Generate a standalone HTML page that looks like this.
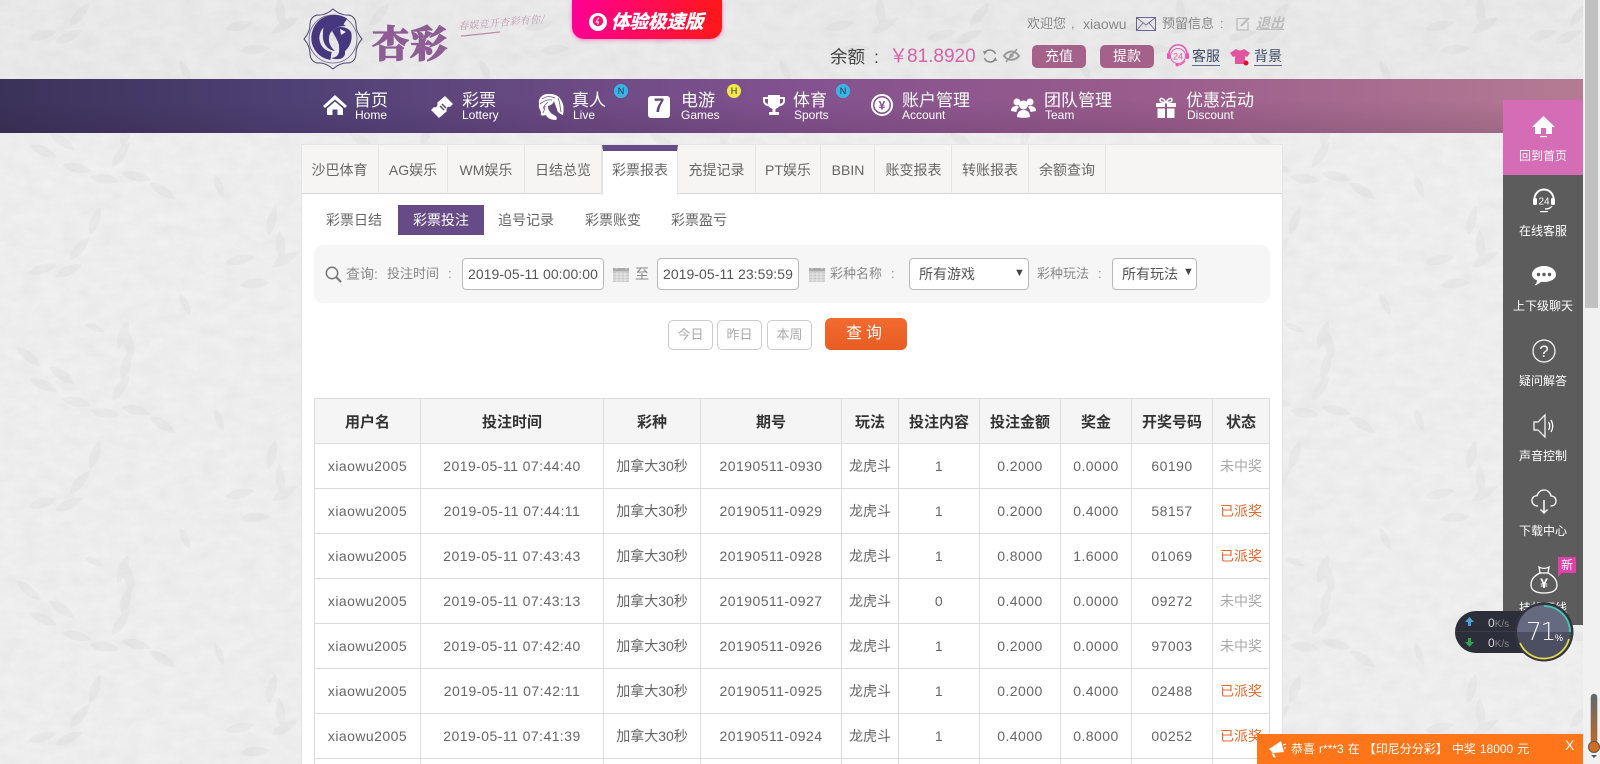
<!DOCTYPE html>
<html lang="zh-CN">
<head>
<meta charset="utf-8">
<title>彩票投注</title>
<style>
*{box-sizing:border-box;margin:0;padding:0}
html,body{width:1600px;height:764px;overflow:hidden;background:#f0f0f0}
body{position:relative;font-family:"Liberation Sans","Noto Sans CJK SC",sans-serif;font-size:14px;color:#666}
.a{position:absolute;white-space:nowrap}
svg{display:block;overflow:visible}
#bg{position:absolute;left:0;top:0}
#nav{position:absolute;left:0;top:79px;width:1583px;height:54px;background:linear-gradient(90deg,#3b3259 0,#4f4175 300px,#83528f 800px,#9a5c8c 1150px,#b57b93 1583px)}
#nav:before{content:"";position:absolute;inset:0;background:linear-gradient(180deg,rgba(0,0,0,0) 40%,rgba(30,10,30,.12) 100%)}
.nz{position:absolute;top:91px;color:#fff;font-size:17px;line-height:20px;white-space:nowrap}
.ne{position:absolute;top:108px;color:#fff;font-size:12px;line-height:15px;white-space:nowrap}
.bd{position:absolute;top:84px;width:14px;height:14px;border-radius:50%;font-size:9px;line-height:14px;text-align:center;color:#234;background:#39b4e6}
#main{position:absolute;left:301px;top:144px;width:982px;height:620px;background:#fff;border:1px solid #e4e4e4;border-bottom:0}
#tabbar{position:absolute;left:301px;top:144px;width:982px;height:50px;background:#f6f5f3;border:1px solid #e5e5e5;border-bottom:1px solid #d9d9d9}
.tab{position:absolute;top:145px;height:49px;line-height:50px;text-align:center;border-right:1px solid #e4e4e4;color:#666;font-size:14px}
.sub{position:absolute;top:205px;height:30px;line-height:30px;font-size:14px;color:#666;white-space:nowrap}
#sbar{position:absolute;left:314px;top:245px;width:956px;height:58px;background:#f6f6f6;border-radius:9px}
.lb{position:absolute;top:265px;font-size:13px;line-height:18px;color:#888;white-space:nowrap}
.ip{position:absolute;top:258px;height:32px;background:#fff;border:1px solid #bbb;border-radius:4px;line-height:31px;font-size:14px;color:#555;white-space:nowrap}
.qb{position:absolute;top:320px;height:30px;border:1px solid #ccc;border-radius:5px;background:#fff;text-align:center;line-height:28px;font-size:13px;color:#aaa}
#tw{position:absolute;left:314px;top:398px;width:958px;height:366px;overflow:hidden}
table{width:955px;border-collapse:collapse;table-layout:fixed;background:#fff}
th,td{border:1px solid #dcdcdc;text-align:center;height:45px;padding:0;overflow:hidden;white-space:nowrap}
th{background:#f5f5f5;color:#333;font-size:15px;font-weight:bold}
td{color:#666;font-size:14px;letter-spacing:.45px}
td.c{letter-spacing:0}
td.n{color:#aaa;letter-spacing:0}
td.y{color:#e8672a;letter-spacing:0}
tr.st td{height:5px;font-size:0;line-height:0}
#side{position:absolute;left:1503px;top:100px;width:80px;height:525px;background:#5c5c5c}
#side .h{position:absolute;left:0;top:0;width:80px;height:75px;background:#d56cb6}
.sl{position:absolute;left:1503px;width:80px;text-align:center;font-size:12px;line-height:16px;color:#fff;white-space:nowrap}
.si{position:absolute}
#track{position:absolute;left:1583px;top:0;width:17px;height:764px;background:#f1f1f1}
#thumb{position:absolute;left:1585px;top:0;width:13px;height:308px;background:#c1c1c1}
#pop{position:absolute;left:1257px;top:734px;width:326px;height:30px;overflow:hidden;background:#ff7519;color:#fff;font-size:12px;line-height:30px}
.pb{position:absolute;top:45px;height:23px;width:54px;background:#a5618a;border-radius:5px;color:#fff;text-align:center;line-height:23px;font-size:14px}
</style>
</head>
<body>
<svg id="bg" width="1600" height="764" viewBox="0 0 1600 764" style="overflow:hidden">
<defs>
<path id="lf" d="M0 0C7-6 20-7 30 0C20 6 7 6 0 0Z"/>
<pattern id="pt" x="0" y="55" width="300" height="234" patternUnits="userSpaceOnUse">
<rect width="300" height="234" fill="#f0f0f0"/>
<g fill="#e9e9e9">
<use href="#lf" transform="translate(17 58) rotate(40)"/>
<use href="#lf" transform="translate(30 90) rotate(25)"/>
<use href="#lf" transform="translate(50 78) rotate(35)"/>
<use href="#lf" transform="translate(62 110) rotate(12)"/>
<use href="#lf" transform="translate(90 122) rotate(8)"/>
<use href="#lf" transform="translate(122 118) rotate(14)"/>
<use href="#lf" transform="translate(150 128) rotate(32)"/>
<use href="#lf" transform="translate(112 112) rotate(-55)"/>
<use href="#lf" transform="translate(122 92) rotate(-75)"/>
<use href="#lf" transform="translate(132 70) rotate(-100)"/>
<use href="#lf" transform="translate(118 60) rotate(-70)"/>
<use href="#lf" transform="translate(85 35) rotate(22) scale(.7)"/>
<use href="#lf" transform="translate(268 180) rotate(-75)"/>
<use href="#lf" transform="translate(282 205) rotate(-95)"/>
<use href="#lf" transform="translate(272 212) rotate(-30)"/>
<use href="#lf" transform="translate(225 208) rotate(-12)"/>
<use href="#lf" transform="translate(240 230) rotate(-5)"/>
<use href="#lf" transform="translate(215 120) rotate(70) scale(.8)"/>
<use href="#lf" transform="translate(70 205) rotate(-50)"/>
<use href="#lf" transform="translate(55 222) rotate(-25)"/>
<use href="#lf" transform="translate(90 180) rotate(-70)"/>
<use href="#lf" transform="translate(28 218) rotate(-15)"/>
<use href="#lf" transform="translate(180 5) rotate(65) scale(.8)"/>
</g>
</pattern>
<filter id="mb" x="0" y="0" width="100%" height="100%"><feTurbulence type="fractalNoise" baseFrequency=".05 .08" numOctaves="5" seed="4"/><feColorMatrix values="0 0 0 0 .45 0 0 0 0 .45 0 0 0 0 .45 .2 0 0 0 -.05"/></filter>
</defs>
<rect width="1600" height="764" fill="url(#pt)"/>
<rect width="1600" height="764" filter="url(#mb)"/>
<rect width="1600" height="79" fill="#000" opacity=".02"/>
</svg>

<!-- logo -->
<svg class="a" style="left:303px;top:8px" width="60" height="62" viewBox="0 0 60 62">
<path d="M30 1Q38 8 46 7Q53 9 53 17Q53 24 59 31Q53 38 53 45Q53 53 46 55Q38 54 30 61Q22 54 14 55Q7 53 7 45Q7 38 1 31Q7 24 7 17Q7 9 14 7Q22 8 30 1Z" fill="none" stroke="#4f4470" stroke-width="1"/>
<circle cx="30" cy="31" r="24" fill="none" stroke="#6a5f8c" stroke-width=".8"/>
<path d="M42 14C33 8 19 11 14 22C9 34 16 46 28 48" fill="none" stroke="#46377f" stroke-width="8"/>
<path d="M22 17C30 13 38 14 43 18C36 18 31 20 28 24C24 30 26 38 32 43C23 42 19 33 20 26C20 22 20 19 22 17Z" fill="#46377f"/>
<path d="M29 23C34 17 44 18 48 24C50 31 47 39 42 43C43 50 37 53 28 50C38 49 36 42 36 37C35 33 32 28 29 23Z" fill="#46377f"/>
<path d="M37 21L43 24L38 27Z" fill="#f0eff3"/>
</svg>
<div class="a" style="left:372px;top:18px;font:900 37px/46px 'Noto Serif CJK SC',serif;color:#8e5d95;letter-spacing:1px;-webkit-text-stroke:1.2px #8e5d95">杏彩</div>
<div class="a" style="left:458px;top:15px;font:italic 10px/14px 'Noto Serif CJK SC',serif;color:#c09ab0;transform:rotate(-5deg);letter-spacing:.3px">春娱竞开杏彩有你/</div>
<svg class="a" style="left:460px;top:28px" width="62" height="10"><path d="M1 8C14 7 28 5 40 4" fill="none" stroke="#b88cab" stroke-width="1.300"/></svg>

<!-- pink button -->
<div class="a" style="left:572px;top:0;width:150px;height:39px;background:linear-gradient(90deg,#ff0094,#ff1818);border-radius:0 0 12px 12px;box-shadow:0 1px 4px rgba(255,60,160,.6)"></div>
<svg class="a" style="left:588px;top:12px" width="20" height="20" viewBox="0 0 20 20"><circle cx="10" cy="10" r="9" fill="#fff"/><circle cx="10" cy="9" r="5.200" fill="#ff0f70"/><path d="M11 5.500L8 10H10.500L9.500 13" stroke="#fff" stroke-width="1" fill="none"/></svg>
<div class="a" style="left:611px;top:11px;font-size:18.5px;line-height:22px;font-weight:bold;font-style:italic;color:#fff;-webkit-text-stroke:.4px #fff">体验极速版</div>

<!-- top right -->
<div class="a" style="left:1027px;top:15px;font-size:13px;line-height:18px;color:#888">欢迎您</div>
<div class="a" style="left:1071px;top:15px;font-size:13px;line-height:18px;color:#888">,</div>
<div class="a" style="left:1083px;top:15px;font-size:14px;line-height:18px;color:#888">xiaowu</div>
<svg class="a" style="left:1136px;top:17px" width="20" height="14" viewBox="0 0 20 14"><rect x=".5" y=".5" width="19" height="13" fill="none" stroke="#6b6390"/><path d="M.5.5L10 8L19.5.5M.5 13.5L7 6M19.5 13.500L13 6" fill="none" stroke="#6b6390" stroke-width=".8"/></svg>
<div class="a" style="left:1162px;top:15px;font-size:13px;line-height:18px;color:#888">预留信息<span style="margin-left:6px">:</span></div>
<svg class="a" style="left:1236px;top:17px" width="14" height="14" viewBox="0 0 14 14"><path d="M11 1.500H1V13H12V5" fill="none" stroke="#bbb" stroke-width="1.300"/><path d="M5 9L13 1" stroke="#bbb" stroke-width="2"/></svg>
<div class="a" style="left:1256px;top:14px;font-size:14px;line-height:18px;font-weight:bold;font-style:italic;color:#bbb;text-decoration:underline">退出</div>

<div class="a" style="left:830px;top:45px;font-size:17.5px;line-height:24px;color:#444">余额<span style="margin-left:9px">:</span></div>
<div class="a" style="left:889px;top:44px;font-size:19px;line-height:25px;color:#d562a8">￥</div>
<div class="a" style="left:907px;top:44px;font-size:19px;line-height:25px;color:#d562a8">81.8920</div>
<svg class="a" style="left:982px;top:48px" width="16" height="16" viewBox="0 0 16 16"><path d="M13.500 6A6 6 0 0 0 3 4.500M2.500 10A6 6 0 0 0 13 11.500" fill="none" stroke="#888" stroke-width="1.500"/><path d="M1 3L5 3.500L2.500 7ZM15 13L11 12.500L13.500 9Z" fill="#888"/></svg>
<svg class="a" style="left:1003px;top:48px" width="17" height="15" viewBox="0 0 17 15"><path d="M1 8C5 2 12 2 16 8C12 13 5 13 1 8Z" fill="none" stroke="#999" stroke-width="2"/><circle cx="8.500" cy="7.500" r="2" fill="#999"/><path d="M3 14L14 1" stroke="#999" stroke-width="1.500"/></svg>
<div class="pb" style="left:1032px">充值</div>
<div class="pb" style="left:1100px">提款</div>
<svg class="a" style="left:1167px;top:44px" width="22" height="23" viewBox="0 0 22 23"><path d="M3 14A9 9 0 1 1 19 14" fill="none" stroke="#e55bb0" stroke-width="1.600"/><circle cx="11" cy="12" r="7.500" fill="none" stroke="#e55bb0" stroke-width="1"/><rect x="0" y="9" width="3" height="6" rx="1" fill="#e55bb0"/><rect x="19" y="9" width="3" height="6" rx="1" fill="#e55bb0"/><path d="M18 17Q15 21 11 21" stroke="#e55bb0" fill="none" stroke-width="1.300"/><circle cx="10" cy="21" r="1.500" fill="#e55bb0"/><text x="11" y="15.500" font-size="9" text-anchor="middle" fill="#e55bb0" font-family="Liberation Sans">24</text></svg>
<div class="a" style="left:1192px;top:47px;font-size:14px;line-height:18px;color:#3d4a66;border-bottom:1px solid #5a6a8a">客服</div>
<svg class="a" style="left:1230px;top:48px" width="21" height="18" viewBox="0 0 21 18"><path d="M6 1L0 5L3 9L5 8V16H15V8L17 9L20 5L14 1Q10 4 6 1Z" fill="#e2549f"/><circle cx="16" cy="15" r="2.500" fill="#e0102a"/></svg>
<div class="a" style="left:1254px;top:47px;font-size:14px;line-height:18px;color:#3d4a66;border-bottom:1px solid #5a6a8a">背景</div>

<!-- nav -->
<div id="nav"></div>
<svg class="a" style="left:323px;top:95px" width="24" height="20" viewBox="0 0 24 20"><path d="M12 0L24 11L22 13L12 4.500L2 13L0 11ZM4 13.500L12 6.500L20 13.500V20H14.500V14.500H9.500V20H4Z" fill="#fff"/></svg>
<div class="nz" style="left:354px">首页</div><div class="ne" style="left:355px">Home</div>
<svg class="a" style="left:430px;top:95px" width="24" height="24" viewBox="0 0 24 24"><path d="M15 1L23 9L20 12Q18 11 17 13Q16 15 17 16L9 23L1 15L4 12Q6 13 7 11Q8 9 7 8Z" fill="#fff"/><path d="M10 11L14 15M12 9L16 13" stroke="#5a4a7e" stroke-width="1.500"/></svg>
<div class="nz" style="left:462px">彩票</div><div class="ne" style="left:462px">Lottery</div>
<svg class="a" style="left:538px;top:93px" width="26" height="28" viewBox="0 0 26 28"><path d="M12 1C5 0 0 5 1 11C0 15 3 17 3 20C2 23 5 23 8 22C9 25 13 27 18 27C20 25 18 23 16 22C12 20 10 17 10 13C13 12 15 11 16 8C17 11 18 14 19 16C19 19 22 21 25 22C26 17 26 11 23 7C21 3 17 1 12 1Z" fill="#fff"/><path d="M4 6C8 3 13 3 17 5M2 11C6 8 10 6 14 7M5 16C6 12 8 11 10 9M20 5C22 9 22 14 23 19M5 20C6 18 7 15 7 13" stroke="#6b5285" fill="none" stroke-width=".8"/></svg>
<div class="nz" style="left:572px">真人</div><div class="ne" style="left:573px">Live</div>
<div class="bd" style="left:614px">N</div>
<div class="a" style="left:648px;top:96px;width:22px;height:22px;background:#fff;border-radius:3px;text-align:center;font-size:19px;line-height:22px;font-weight:bold;color:#5e4a7f">7</div>
<div class="nz" style="left:681px">电游</div><div class="ne" style="left:681px">Games</div>
<div class="bd" style="left:727px;background:#f1e948">H</div>
<svg class="a" style="left:763px;top:95px" width="22" height="22" viewBox="0 0 22 22"><path d="M5 0H17V2H22V6C22 9 19 11 16 11.500C15 13 13 13.500 12.500 14V17H16V20H6V17H9.500V14C9 13.500 7 13 6 11.500C3 11 0 9 0 6V2H5ZM2 4V6C2 7.500 3.500 8.500 5 9V4ZM20 4H17V9C18.500 8.500 20 7.500 20 6Z" fill="#fff"/></svg>
<div class="nz" style="left:793px">体育</div><div class="ne" style="left:794px">Sports</div>
<div class="bd" style="left:836px">N</div>
<svg class="a" style="left:871px;top:94px" width="22" height="22" viewBox="0 0 22 22"><circle cx="11" cy="11" r="10" fill="none" stroke="#fff" stroke-width="2"/><circle cx="11" cy="11" r="7.500" fill="#fff"/><text x="11" y="15.500" font-size="12" font-weight="bold" text-anchor="middle" fill="#7f5288" font-family="Liberation Sans">¥</text></svg>
<div class="nz" style="left:902px">账户管理</div><div class="ne" style="left:902px">Account</div>
<svg class="a" style="left:1011px;top:96px" width="25" height="22" viewBox="0 0 25 22"><circle cx="6" cy="6" r="3.500" fill="#fff"/><circle cx="19" cy="6" r="3.500" fill="#fff"/><circle cx="12.500" cy="9" r="4.500" fill="#fff"/><path d="M0 15C0 11 3 10 6 10C7 10 7.500 10.500 8 11C6 13 5.500 15 5.500 16ZM25 15C25 11 22 10 19 10C18 10 17.500 10.500 17 11C19 13 19.500 15 19.500 16ZM6 21C6 16 9 14 12.500 14C16 14 19 16 19 21C15 22 10 22 6 21Z" fill="#fff"/></svg>
<div class="nz" style="left:1044px">团队管理</div><div class="ne" style="left:1045px">Team</div>
<svg class="a" style="left:1156px;top:97px" width="20" height="21" viewBox="0 0 20 21"><path d="M0 6H9V10H0ZM11 6H20V10H11ZM1.500 11.500H9V21H1.500ZM11 11.500H18.500V21H11Z" fill="#fff"/><path d="M10 5.500C7 5.500 4 5 4 3C4 .5 7 .5 10 5.500C13 .5 16 .5 16 3C16 5 13 5.500 10 5.500Z" fill="none" stroke="#fff" stroke-width="1.500"/></svg>
<div class="nz" style="left:1186px">优惠活动</div><div class="ne" style="left:1187px">Discount</div>

<!-- main -->
<div id="main"></div>
<div id="tabbar"></div>
<div class="tab" style="left:301px;width:78px">沙巴体育</div>
<div class="tab" style="left:379px;width:69px">AG娱乐</div>
<div class="tab" style="left:448px;width:77px">WM娱乐</div>
<div class="tab" style="left:525px;width:77px">日结总览</div>
<div class="tab" style="left:602px;width:76px;background:#fff;height:50px;border-left:1px solid #e4e4e4;border-top:6px solid #664b87;line-height:39px;top:145px">彩票报表</div>
<div class="tab" style="left:678px;width:78px">充提记录</div>
<div class="tab" style="left:756px;width:65px">PT娱乐</div>
<div class="tab" style="left:821px;width:54px;padding-left:1px">BBIN</div>
<div class="tab" style="left:875px;width:77px;padding-left:1px">账变报表</div>
<div class="tab" style="left:952px;width:77px">转账报表</div>
<div class="tab" style="left:1029px;width:77px">余额查询</div>

<div class="sub" style="left:326px">彩票日结</div>
<div class="sub" style="left:398px;width:86px;text-align:center;background:#664b87;color:#fff">彩票投注</div>
<div class="sub" style="left:498px">追号记录</div>
<div class="sub" style="left:585px">彩票账变</div>
<div class="sub" style="left:671px">彩票盈亏</div>

<div id="sbar"></div>
<svg class="a" style="left:325px;top:266px" width="17" height="17" viewBox="0 0 17 17"><circle cx="7" cy="7" r="5.700" fill="none" stroke="#777" stroke-width="1.500"/><path d="M11 11L16 16" stroke="#777" stroke-width="2"/></svg>
<div class="lb" style="left:346px;font-size:14px">查询:</div>
<div class="lb" style="left:387px">投注时间<span style="margin-left:9px">:</span></div>
<div class="ip" style="left:462px;width:142px;padding-left:5px;letter-spacing:.05px">2019-05-11 00:00:00</div>
<svg class="a" style="left:613px;top:266px" width="16" height="16" viewBox="0 0 16 16"><rect y="2" width="16" height="14" fill="#c8c8c8"/><rect y="2" width="16" height="3" fill="#aaa"/><path d="M3 0V3M13 0V3M0 8H16M0 11H16M0 14H16M4 6V16M8 6V16M12 6V16" stroke="#f2f2f2" stroke-width=".7"/></svg>
<div class="lb" style="left:635px;font-size:14px">至</div>
<div class="ip" style="left:657px;width:142px;padding-left:5px;letter-spacing:.05px">2019-05-11 23:59:59</div>
<svg class="a" style="left:809px;top:266px" width="16" height="16" viewBox="0 0 16 16"><rect y="2" width="16" height="14" fill="#c8c8c8"/><rect y="2" width="16" height="3" fill="#aaa"/><path d="M3 0V3M13 0V3M0 8H16M0 11H16M0 14H16M4 6V16M8 6V16M12 6V16" stroke="#f2f2f2" stroke-width=".7"/></svg>
<div class="lb" style="left:830px">彩种名称<span style="margin-left:9px">:</span></div>
<div class="ip" style="left:909px;width:120px;padding-left:9px">所有游戏<span class="a" style="left:104px;top:-1px;font-size:11px;color:#444">▼</span></div>
<div class="lb" style="left:1037px">彩种玩法<span style="margin-left:9px">:</span></div>
<div class="ip" style="left:1112px;width:85px;padding-left:9px">所有玩法<span class="a" style="left:70px;top:-2px;font-size:11px;color:#444">▼</span></div>

<div class="qb" style="left:668px;width:45px">今日</div>
<div class="qb" style="left:717px;width:45px">昨日</div>
<div class="qb" style="left:767px;width:45px">本周</div>
<div class="a" style="left:825px;top:318px;width:82px;height:32px;border-radius:6px;background:linear-gradient(180deg,#f26b30,#e85c22);color:#fff;text-align:center;font-size:16px;line-height:31px;letter-spacing:4px">查询</div>

<div id="tw">
<table>
<colgroup><col style="width:106px"><col style="width:183px"><col style="width:97px"><col style="width:141px"><col style="width:57px"><col style="width:81px"><col style="width:81px"><col style="width:71px"><col style="width:81px"><col style="width:57px"></colgroup>
<tr><th>用户名</th><th>投注时间</th><th>彩种</th><th>期号</th><th>玩法</th><th>投注内容</th><th>投注金额</th><th>奖金</th><th>开奖号码</th><th>状态</th></tr>
<tr><td>xiaowu2005</td><td>2019-05-11 07:44:40</td><td class="c">加拿大30秒</td><td>20190511-0930</td><td class="c">龙虎斗</td><td>1</td><td>0.2000</td><td>0.0000</td><td>60190</td><td class="n">未中奖</td></tr>
<tr><td>xiaowu2005</td><td>2019-05-11 07:44:11</td><td class="c">加拿大30秒</td><td>20190511-0929</td><td class="c">龙虎斗</td><td>1</td><td>0.2000</td><td>0.4000</td><td>58157</td><td class="y">已派奖</td></tr>
<tr><td>xiaowu2005</td><td>2019-05-11 07:43:43</td><td class="c">加拿大30秒</td><td>20190511-0928</td><td class="c">龙虎斗</td><td>1</td><td>0.8000</td><td>1.6000</td><td>01069</td><td class="y">已派奖</td></tr>
<tr><td>xiaowu2005</td><td>2019-05-11 07:43:13</td><td class="c">加拿大30秒</td><td>20190511-0927</td><td class="c">龙虎斗</td><td>0</td><td>0.4000</td><td>0.0000</td><td>09272</td><td class="n">未中奖</td></tr>
<tr><td>xiaowu2005</td><td>2019-05-11 07:42:40</td><td class="c">加拿大30秒</td><td>20190511-0926</td><td class="c">龙虎斗</td><td>1</td><td>0.2000</td><td>0.0000</td><td>97003</td><td class="n">未中奖</td></tr>
<tr><td>xiaowu2005</td><td>2019-05-11 07:42:11</td><td class="c">加拿大30秒</td><td>20190511-0925</td><td class="c">龙虎斗</td><td>1</td><td>0.2000</td><td>0.4000</td><td>02488</td><td class="y">已派奖</td></tr>
<tr><td>xiaowu2005</td><td>2019-05-11 07:41:39</td><td class="c">加拿大30秒</td><td>20190511-0924</td><td class="c">龙虎斗</td><td>1</td><td>0.4000</td><td>0.8000</td><td>00252</td><td class="y">已派奖</td></tr>
</table>
<div class="a" style="left:0;top:360px;width:956px;height:6px;background:linear-gradient(90deg,#dcdcdc 1px,transparent 1px) 106px 0/956px 6px no-repeat,linear-gradient(90deg,#dcdcdc 1px,transparent 1px) 289px 0/956px 6px no-repeat,linear-gradient(90deg,#dcdcdc 1px,transparent 1px) 386px 0/956px 6px no-repeat,linear-gradient(90deg,#dcdcdc 1px,transparent 1px) 527px 0/956px 6px no-repeat,linear-gradient(90deg,#dcdcdc 1px,transparent 1px) 584px 0/956px 6px no-repeat,linear-gradient(90deg,#dcdcdc 1px,transparent 1px) 665px 0/956px 6px no-repeat,linear-gradient(90deg,#dcdcdc 1px,transparent 1px) 746px 0/956px 6px no-repeat,linear-gradient(90deg,#dcdcdc 1px,transparent 1px) 817px 0/956px 6px no-repeat,linear-gradient(90deg,#dcdcdc 1px,transparent 1px) 898px 0/956px 6px no-repeat,linear-gradient(90deg,#dcdcdc 1px,transparent 1px) 955px 0/956px 6px no-repeat,linear-gradient(90deg,#dcdcdc 1px,transparent 1px) 0 0/956px 6px no-repeat"></div>
</div>

<!-- scrollbar -->
<div id="track"></div><div id="thumb"></div>
<svg class="a" style="left:1586px;top:693px" width="14" height="70" viewBox="0 0 14 70"><defs><linearGradient id="tg" x1="0" y1="0" x2="0" y2="1"><stop offset="0" stop-color="#5d6a70"/><stop offset="1" stop-color="#c8691f"/></linearGradient></defs><rect x="5" y="1" width="6" height="52" rx="3" fill="url(#tg)" stroke="#666" stroke-width=".5"/><circle cx="8" cy="54" r="5.500" fill="#d0701e" stroke="#555" stroke-width="1"/><path d="M5 62H11L8 65Z" fill="#555"/></svg>

<!-- sidebar -->
<div id="side"><div class="h"></div></div>
<svg class="si" style="left:1532px;top:116px" width="23" height="22" viewBox="0 0 23 22"><path d="M11.500 0L23 11H20V18H14V12H9V18H3V11H0Z" fill="#fff"/><rect x="8" y="20" width="7" height="1.200" fill="#fff"/></svg>
<div class="sl" style="top:148px">回到首页</div>
<svg class="si" style="left:1532px;top:189px" width="24" height="25" viewBox="0 0 24 25"><path d="M3 13A9.500 9.500 0 1 1 21 13" fill="none" stroke="#fff" stroke-width="2"/><rect x="1" y="9" width="4" height="7" rx="1.500" fill="#fff"/><rect x="19" y="9" width="4" height="7" rx="1.500" fill="#fff"/><path d="M20 17Q18 20 13 20" fill="none" stroke="#fff" stroke-width="1.300"/><rect x="8" y="22" width="8" height="1.200" fill="#fff"/><text x="12" y="15.500" font-size="10" text-anchor="middle" fill="#fff" font-family="Liberation Sans">24</text></svg>
<div class="sl" style="top:223px">在线客服</div>
<svg class="si" style="left:1532px;top:266px" width="24" height="20" viewBox="0 0 24 20"><path d="M12 0C18.500 0 24 3.500 24 8.500C24 13 18.500 16 12 16C11 16 10 16 9 15.800C7.500 17.500 5 19 2.500 19.500C4 18 5 16 5 14.500C2 13 0 11 0 8.500C0 3.500 5.500 0 12 0Z" fill="#fff"/><circle cx="6.500" cy="8.500" r="1.700" fill="#5c5c5c"/><circle cx="12" cy="8.500" r="1.700" fill="#5c5c5c"/><circle cx="17.500" cy="8.500" r="1.700" fill="#5c5c5c"/></svg>
<div class="sl" style="top:298px">上下级聊天</div>
<svg class="si" style="left:1532px;top:339px" width="24" height="24" viewBox="0 0 24 24"><circle cx="12" cy="12" r="11" fill="none" stroke="#fff" stroke-width="1.200"/><text x="12" y="18" font-size="17" text-anchor="middle" fill="#fff" font-family="Liberation Sans">?</text></svg>
<div class="sl" style="top:373px">疑问解答</div>
<svg class="si" style="left:1533px;top:414px" width="22" height="24" viewBox="0 0 22 24"><path d="M1 8H5L12 1V23L5 16H1Z" fill="none" stroke="#fff" stroke-width="1.200"/><path d="M15.500 8Q18 12 15.500 16M18 6Q21.500 12 18 18" fill="none" stroke="#fff" stroke-width="1.300"/></svg>
<div class="sl" style="top:448px">声音控制</div>
<svg class="si" style="left:1531px;top:489px" width="26" height="26" viewBox="0 0 26 26"><path d="M7 17C3 17 1 14.500 1 11.500C1 8.500 3.500 6.500 6 6.800C7 3 10 1 13 1C17 1 19.500 4 20 7C23 7 25 9 25 12C25 15 23 17 19.500 17" fill="none" stroke="#fff" stroke-width="1.300"/><path d="M13 11V24M9.500 20.500L13 24L16.500 20.500" fill="none" stroke="#fff" stroke-width="1.500"/></svg>
<div class="sl" style="top:523px">下载中心</div>
<svg class="si" style="left:1530px;top:565px" width="28" height="29" viewBox="0 0 28 29"><path d="M9 2Q14 5 19 2L18 8Q27 13 27 20C27 26 21 28 14 28C7 28 1 26 1 20C1 13 6 10 10 8Z" fill="none" stroke="#fff" stroke-width="1.300"/><path d="M10 8H18" stroke="#fff" stroke-width="1.300"/><text x="14" y="23" font-size="14" font-weight="bold" text-anchor="middle" fill="#fff" font-family="Liberation Sans">¥</text></svg>
<div class="a" style="left:1558px;top:557px;width:18px;height:16px;background:#e23fa8;color:#fff;font-size:12px;line-height:16px;text-align:center">新</div>
<div class="a" style="left:1558px;top:573px;width:0;height:0;border-top:4px solid #e23fa8;border-right:4px solid transparent"></div>
<div class="sl" style="top:600px">挂机下线</div>

<!-- speed widget -->
<div class="a" style="left:1455px;top:611px;width:100px;height:42px;border-radius:21px;background:#2c2e3a"></div>
<div class="a" style="left:1455px;top:631px;width:95px;height:1px;background:#3a3c48"></div>
<svg class="a" style="left:1465px;top:617px" width="9" height="9" viewBox="0 0 9 9"><path d="M4.500 0L9 5H6V9H3V5H0Z" fill="#4aa3d8"/></svg>
<svg class="a" style="left:1465px;top:638px" width="9" height="9" viewBox="0 0 9 9"><path d="M4.500 9L9 4H6V0H3V4H0Z" fill="#2fa84f"/></svg>
<div class="a" style="left:1488px;top:615px;font-size:12px;line-height:16px;color:#d8d8d8">0<span style="font-size:10px;color:#888">K/s</span></div>
<div class="a" style="left:1488px;top:635px;font-size:12px;line-height:16px;color:#d8d8d8">0<span style="font-size:10px;color:#888">K/s</span></div>
<svg class="a" style="left:1514px;top:602px" width="60" height="60" viewBox="0 0 60 60">
<circle cx="30" cy="30" r="29.500" fill="#33343f"/>
<path d="M3 30A27 27 0 0 1 57 30Z" fill="#666a80"/>
<path d="M3 30A27 27 0 0 0 57 30Z" fill="#4c4e62"/>
<path d="M30 4A26 26 0 0 1 56 30" fill="none" stroke="#45c9ae" stroke-width="1.800"/>
<path d="M55 37A26 26 0 0 1 6 41" fill="none" stroke="#e0d94c" stroke-width="1.800"/>
<text x="12" y="38" font-size="25" fill="#f4f4f4" font-family="DejaVu Sans, Liberation Sans" font-weight="200" letter-spacing="-1.500">71</text>
<text x="41" y="39" font-size="9" fill="#fff" font-family="Liberation Sans">%</text>
</svg>

<!-- popup -->
<div id="pop">
<svg class="a" style="left:11px;top:6px" width="18" height="18" viewBox="0 0 18 18"><path d="M1 9L13 1L16 12L5 13ZM6 13.500L8 18L5.500 17L3.500 13.500Z" fill="#fff"/><path d="M15 5L18 4M16 8H18" stroke="#fff"/></svg>
<span class="a" style="left:34px;top:0;word-spacing:.7px">恭喜 r***3 在 【印尼分分彩】 中奖 18000 元</span>
<span class="a" style="left:308px;top:-4px;font-size:14px">X</span>
</div>
</body>
</html>
